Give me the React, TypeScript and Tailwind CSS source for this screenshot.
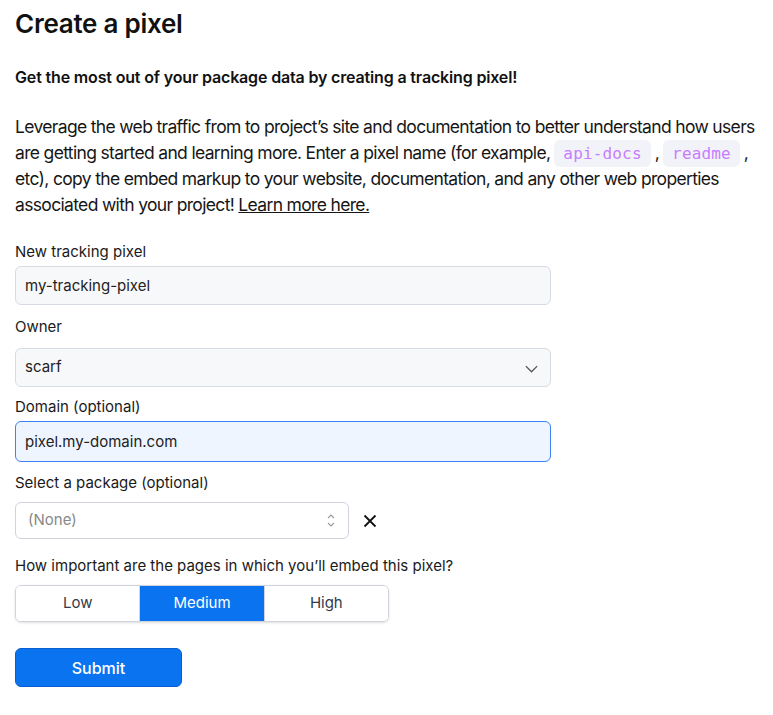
import React, { useState } from 'react';

const LEVELS = ['Low', 'Medium', 'High'];

const Label: React.FC<{ children: React.ReactNode }> = ({ children }) => (
  <label className="block text-[15px] leading-5 text-[#1a1a1a]">{children}</label>
);

const Code: React.FC<{ children: React.ReactNode }> = ({ children }) => (
  <code className="mx-[4px] whitespace-nowrap rounded-md bg-[#f1f3f8] px-[9px] py-[4px] font-['DejaVu_Sans_Mono',monospace] text-[16px] tracking-[0.01em] text-[#c77dff]">
    {children}
  </code>
);

export default function App() {
  const [level, setLevel] = useState('Medium');

  return (
    <div className="min-h-screen bg-white px-[15px] pt-[6px] font-['Inter',sans-serif] text-[#111]">
      <h1 className="text-[26px] font-semibold leading-9 tracking-[-0.01em]">Create a pixel</h1>

      <p className="mt-[23px] text-[16px] font-semibold leading-6 tracking-[-0.01em]">
        Get the most out of your package data by creating a tracking pixel!
      </p>

      <p className="mt-[25px] whitespace-nowrap text-[17.5px] leading-[25.5px] tracking-[-0.038em] text-[#161616]">
        Leverage the web traffic from to project’s site and documentation to better understand how users
        <br />
        are getting started and learning more. Enter a pixel name (for example,
        <Code>api-docs</Code>
        ,
        <Code>readme</Code>
        ,
        <br />
        etc), copy the embed markup to your website, documentation, and any other web properties
        <br />
        associated with your project!
        {' '}
        <a href="#" className="underline">Learn more here.</a>
      </p>

      <div className="mt-[25px] w-[536px]">
        <Label>New tracking pixel</Label>
        <input
          defaultValue="my-tracking-pixel"
          className="mt-[4px] h-[39px] w-full rounded-md border border-[#d7dbe3] bg-[#f7f8fa] px-[9px] text-[15px] text-[#222] outline-none"
        />

        <div className="mt-[12px]">
          <Label>Owner</Label>
        </div>
        <div className="relative mt-[11px]">
          <select className="h-[39px] w-full appearance-none rounded-md border border-[#d7dbe3] bg-[#f7f8fa] px-[9px] text-[15px] text-[#222] outline-none">
            <option>scarf</option>
          </select>
          <svg className="pointer-events-none absolute right-[12px] top-[13px] size-[15px] text-[#555]" viewBox="0 0 16 16" fill="none" stroke="currentColor" strokeWidth="1.4">
            <path d="M2 5.5l6 6 6-6" />
          </svg>
        </div>

        <div className="mt-[10px]">
          <Label>Domain (optional)</Label>
        </div>
        <input
          defaultValue="pixel.my-domain.com"
          className="mt-[4px] h-[41px] w-full rounded-md border border-[#3b82f6] bg-[#eef5ff] px-[9px] text-[15px] text-[#222] outline-none"
        />

        <div className="mt-[11px]">
          <Label>Select a package (optional)</Label>
        </div>
        <div className="mt-[9px] flex items-center gap-[14px]">
          <div className="relative w-[334px]">
            <select className="h-[37px] w-full appearance-none rounded-md border border-[#cfd4dc] bg-white px-[12px] text-[15px] text-[#888] outline-none">
              <option>(None)</option>
            </select>
            <svg className="pointer-events-none absolute right-[13px] top-[11px] h-[15px] w-[10px] text-[#999]" viewBox="0 0 10 15" fill="none" stroke="currentColor" strokeWidth="1.1">
              <path d="M2 5l3-3 3 3M2 10l3 3 3-3" />
            </svg>
          </div>
          <svg className="size-[14px] text-[#111]" viewBox="0 0 14 14" fill="none" stroke="currentColor" strokeWidth="1.8">
            <path d="M1.5 1.5l11 11M12.5 1.5l-11 11" />
          </svg>
        </div>

        <div className="mt-[17px]">
          <Label>How important are the pages in which you’ll embed this pixel?</Label>
        </div>
        <div className="mt-[9px] flex h-[37px] w-[374px] overflow-hidden rounded-md border border-[#cfd4dc] shadow-sm">
          {LEVELS.map((l, i) => (
            <button
              key={l}
              type="button"
              onClick={() => setLevel(l)}
              className={`flex-1 text-[15px] ${i > 0 ? 'border-l border-[#cfd4dc]' : ''} ${level === l ? 'bg-[#0a74f0] text-white' : 'bg-white text-[#333a48]'}`}
            >
              {l}
            </button>
          ))}
        </div>

        <button
          type="button"
          className="mt-[26px] h-[39px] w-[167px] rounded-md border border-[#0a5fd0] bg-[#0a74f0] text-[16px] font-medium text-white"
        >
          Submit
        </button>
      </div>
    </div>
  );
}
